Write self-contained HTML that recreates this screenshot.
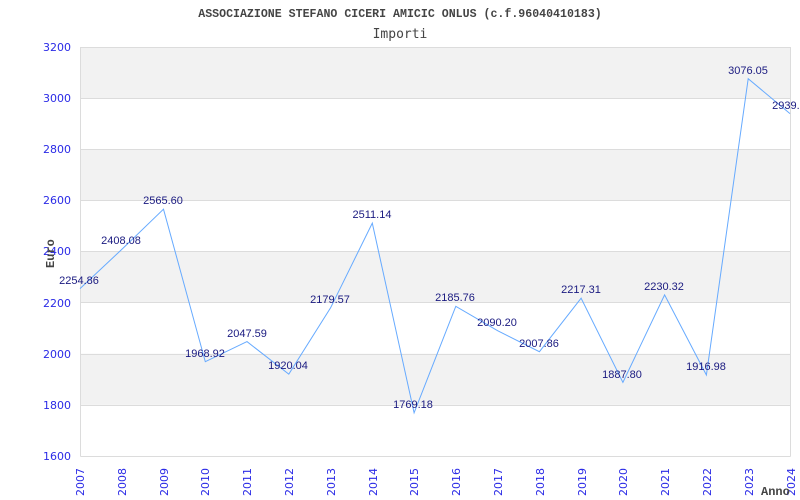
<!DOCTYPE html>
<html><head><meta charset="utf-8"><style>
html,body{margin:0;padding:0;background:#fff;}
svg{display:block}
</style></head><body>
<svg width="800" height="500" xmlns="http://www.w3.org/2000/svg">
<rect width="800" height="500" fill="#fff"/>
<text x="400" y="17" text-anchor="middle" font-family="Liberation Mono, monospace" font-size="11.6" font-weight="bold" fill="#444">ASSOCIAZIONE STEFANO CICERI AMICIC ONLUS (c.f.96040410183)</text>
<text x="400" y="38" text-anchor="middle" font-family="DejaVu Sans Mono, monospace" font-size="13" fill="#444">Importi</text>
<g>
<rect x="80.5" y="47" width="710" height="51.1" fill="#f2f2f2"/>
<rect x="80.5" y="149.2" width="710" height="51.1" fill="#f2f2f2"/>
<rect x="80.5" y="251.4" width="710" height="51.1" fill="#f2f2f2"/>
<rect x="80.5" y="353.7" width="710" height="51.1" fill="#f2f2f2"/>
<g stroke="#dcdcdc" stroke-width="1">
<line x1="80.5" x2="790.5" y1="47.5" y2="47.5"/>
<line x1="80.5" x2="790.5" y1="98.5" y2="98.5"/>
<line x1="80.5" x2="790.5" y1="149.5" y2="149.5"/>
<line x1="80.5" x2="790.5" y1="200.5" y2="200.5"/>
<line x1="80.5" x2="790.5" y1="251.5" y2="251.5"/>
<line x1="80.5" x2="790.5" y1="302.5" y2="302.5"/>
<line x1="80.5" x2="790.5" y1="354.5" y2="354.5"/>
<line x1="80.5" x2="790.5" y1="405.5" y2="405.5"/>
<line x1="80.5" x2="790.5" y1="456.5" y2="456.5"/>
<line x1="80.5" x2="80.5" y1="47" y2="456.5"/>
<line x1="790.5" x2="790.5" y1="47" y2="456.5"/>
</g>
</g>
<g font-family="DejaVu Sans, sans-serif" font-size="11" fill="#2a2ae6" text-anchor="end">
<text x="71" y="51">3200</text><text x="71" y="102">3000</text><text x="71" y="153">2800</text>
<text x="71" y="204">2600</text><text x="71" y="255">2400</text><text x="71" y="307">2200</text>
<text x="71" y="358">2000</text><text x="71" y="409">1800</text><text x="71" y="460">1600</text>
</g>
<g font-family="DejaVu Sans, sans-serif" font-size="11" fill="#2a2ae6">
<text transform="translate(84,496) rotate(-90)">2007</text>
<text transform="translate(126,496) rotate(-90)">2008</text>
<text transform="translate(168,496) rotate(-90)">2009</text>
<text transform="translate(209,496) rotate(-90)">2010</text>
<text transform="translate(251,496) rotate(-90)">2011</text>
<text transform="translate(293,496) rotate(-90)">2012</text>
<text transform="translate(335,496) rotate(-90)">2013</text>
<text transform="translate(377,496) rotate(-90)">2014</text>
<text transform="translate(418,496) rotate(-90)">2015</text>
<text transform="translate(460,496) rotate(-90)">2016</text>
<text transform="translate(502,496) rotate(-90)">2017</text>
<text transform="translate(544,496) rotate(-90)">2018</text>
<text transform="translate(586,496) rotate(-90)">2019</text>
<text transform="translate(627,496) rotate(-90)">2020</text>
<text transform="translate(669,496) rotate(-90)">2021</text>
<text transform="translate(711,496) rotate(-90)">2022</text>
<text transform="translate(753,496) rotate(-90)">2023</text>
<text transform="translate(795,496) rotate(-90)">2024</text>
</g>
<text x="761" y="495" font-family="Liberation Mono, monospace" font-size="12" font-weight="bold" fill="#444">Anno</text>
<text transform="translate(54,268) rotate(-90)" font-family="Liberation Mono, monospace" font-size="12" font-weight="bold" fill="#444">Euro</text>
<polyline fill="none" stroke="#66aaff" stroke-width="1" points="80,288.6 121.8,249.4 163.5,209.2 205.3,361.7 247,341.6 288.8,374.2 330.6,307.8 372.3,223.1 414.1,412.8 455.8,306.3 497.6,330.7 539.4,351.7 581.1,298.2 622.9,382.4 664.6,294.9 706.4,375 748.2,78.7 790,113.6"/>
<g font-family="Liberation Sans, sans-serif" font-size="11" fill="#1a1a80" text-anchor="middle">
<text x="79" y="284">2254.86</text>
<text x="121" y="244">2408.08</text>
<text x="163" y="204">2565.60</text>
<text x="205" y="357">1968.92</text>
<text x="247" y="337">2047.59</text>
<text x="288" y="369">1920.04</text>
<text x="330" y="303">2179.57</text>
<text x="372" y="218">2511.14</text>
<text x="413" y="408">1769.18</text>
<text x="455" y="301">2185.76</text>
<text x="497" y="326">2090.20</text>
<text x="539" y="347">2007.86</text>
<text x="581" y="293">2217.31</text>
<text x="622" y="378">1887.80</text>
<text x="664" y="290">2230.32</text>
<text x="706" y="370">1916.98</text>
<text x="748" y="74">3076.05</text>
<text x="789" y="109">2939.4</text>
</g>
</svg>
</body></html>
